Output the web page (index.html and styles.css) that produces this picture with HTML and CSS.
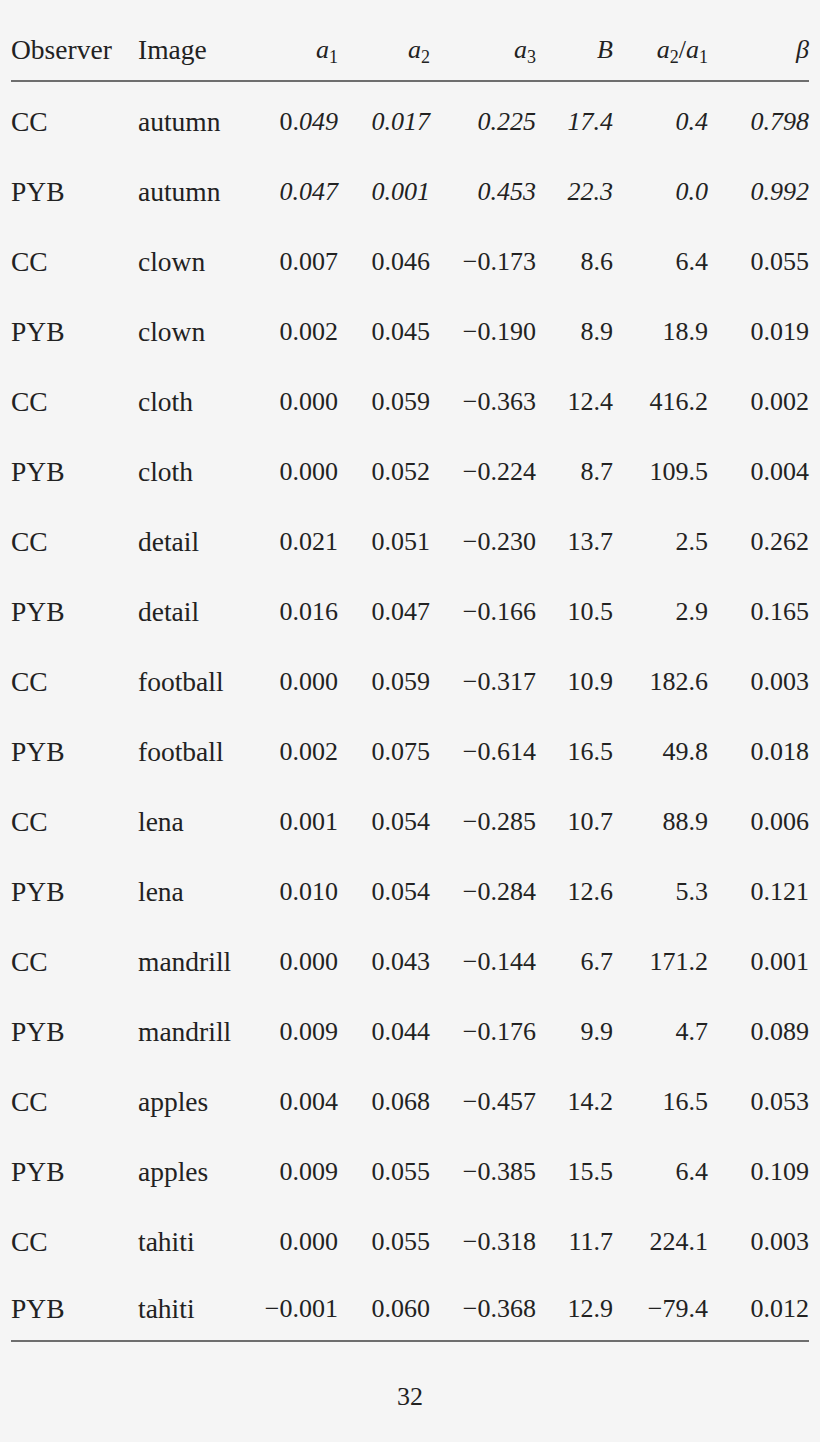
FILE: index.html
```html
<!DOCTYPE html>
<html>
<head>
<meta charset="utf-8">
<link rel="stylesheet" href="styles.css">
</head>
<body>
<div class="page">
<table class="tbl">
<colgroup>
<col class="c1"><col class="c2"><col class="c3"><col class="c4"><col class="c5"><col class="c6"><col class="c7"><col class="c8">
</colgroup>
<thead>
<tr>
<th class="l">Observer</th><th class="l">Image</th>
<th><span class="m">a</span><sub>1</sub></th>
<th><span class="m">a</span><sub>2</sub></th>
<th><span class="m">a</span><sub>3</sub></th>
<th><span class="m">B</span></th>
<th><span class="m">a</span><sub>2</sub>/<span class="m">a</span><sub>1</sub></th>
<th><span class="m">β</span></th>
</tr>
</thead>
<tbody>
<tr class="first"><td class="l">CC</td><td class="l">autumn</td><td>0.<i>049</i></td><td><i>0.017</i></td><td><i>0.225</i></td><td><i>17.4</i></td><td><i>0.4</i></td><td><i>0.798</i></td></tr>
<tr><td class="l">PYB</td><td class="l">autumn</td><td><i>0.047</i></td><td><i>0.001</i></td><td><i>0.453</i></td><td><i>22.3</i></td><td><i>0.0</i></td><td><i>0.992</i></td></tr>
<tr><td class="l">CC</td><td class="l">clown</td><td>0.007</td><td>0.046</td><td>−0.173</td><td>8.6</td><td>6.4</td><td>0.055</td></tr>
<tr><td class="l">PYB</td><td class="l">clown</td><td>0.002</td><td>0.045</td><td>−0.190</td><td>8.9</td><td>18.9</td><td>0.019</td></tr>
<tr><td class="l">CC</td><td class="l">cloth</td><td>0.000</td><td>0.059</td><td>−0.363</td><td>12.4</td><td>416.2</td><td>0.002</td></tr>
<tr><td class="l">PYB</td><td class="l">cloth</td><td>0.000</td><td>0.052</td><td>−0.224</td><td>8.7</td><td>109.5</td><td>0.004</td></tr>
<tr><td class="l">CC</td><td class="l">detail</td><td>0.021</td><td>0.051</td><td>−0.230</td><td>13.7</td><td>2.5</td><td>0.262</td></tr>
<tr><td class="l">PYB</td><td class="l">detail</td><td>0.016</td><td>0.047</td><td>−0.166</td><td>10.5</td><td>2.9</td><td>0.165</td></tr>
<tr><td class="l">CC</td><td class="l">football</td><td>0.000</td><td>0.059</td><td>−0.317</td><td>10.9</td><td>182.6</td><td>0.003</td></tr>
<tr><td class="l">PYB</td><td class="l">football</td><td>0.002</td><td>0.075</td><td>−0.614</td><td>16.5</td><td>49.8</td><td>0.018</td></tr>
<tr><td class="l">CC</td><td class="l">lena</td><td>0.001</td><td>0.054</td><td>−0.285</td><td>10.7</td><td>88.9</td><td>0.006</td></tr>
<tr><td class="l">PYB</td><td class="l">lena</td><td>0.010</td><td>0.054</td><td>−0.284</td><td>12.6</td><td>5.3</td><td>0.121</td></tr>
<tr><td class="l">CC</td><td class="l">mandrill</td><td>0.000</td><td>0.043</td><td>−0.144</td><td>6.7</td><td>171.2</td><td>0.001</td></tr>
<tr><td class="l">PYB</td><td class="l">mandrill</td><td>0.009</td><td>0.044</td><td>−0.176</td><td>9.9</td><td>4.7</td><td>0.089</td></tr>
<tr><td class="l">CC</td><td class="l">apples</td><td>0.004</td><td>0.068</td><td>−0.457</td><td>14.2</td><td>16.5</td><td>0.053</td></tr>
<tr><td class="l">PYB</td><td class="l">apples</td><td>0.009</td><td>0.055</td><td>−0.385</td><td>15.5</td><td>6.4</td><td>0.109</td></tr>
<tr><td class="l">CC</td><td class="l">tahiti</td><td>0.000</td><td>0.055</td><td>−0.318</td><td>11.7</td><td>224.1</td><td>0.003</td></tr>
<tr class="last"><td class="l">PYB</td><td class="l">tahiti</td><td>−0.001</td><td>0.060</td><td>−0.368</td><td>12.9</td><td>−79.4</td><td>0.012</td></tr>
</tbody>
</table>
<div class="pagenum">32</div>
</div>
</body>
</html>
```

FILE: styles.css
```css
html, body {
  margin: 0;
  padding: 0;
  background: #f5f5f5;
}
body {
  font-family: "Liberation Serif", "DejaVu Serif", serif;
  font-size: 26px;
  color: #222;
}
.page {
  padding: 19px 11px 0 11px;
}
.tbl {
  width: 798px;
  table-layout: fixed;
  border-collapse: collapse;
}
.c1 { width: 127px; }
.c2 { width: 110px; }
.c3 { width: 90px; }
.c4 { width: 92px; }
.c5 { width: 106px; }
.c6 { width: 77px; }
.c7 { width: 95px; }
.c8 { width: 101px; }
.tbl th, .tbl td {
  padding: 0;
  text-align: right;
  font-weight: normal;
  white-space: nowrap;
  line-height: 70px;
  vertical-align: middle;
}
.tbl th.l, .tbl td.l {
  text-align: left;
  font-size: 27.5px;
}
.tbl thead th {
  line-height: 61px;
  border-bottom: 2px solid #6e6e6e;
}
.tbl tr.first td {
  padding-top: 5px;
}
.tbl tr.last td {
  line-height: 63px;
  border-bottom: 2px solid #6e6e6e;
}
.m {
  font-style: italic;
}
sub {
  font-size: 18px;
  line-height: 0;
  vertical-align: -5px;
}
.pagenum {
  text-align: center;
  line-height: 30px;
  margin-top: 40px;
}
```
